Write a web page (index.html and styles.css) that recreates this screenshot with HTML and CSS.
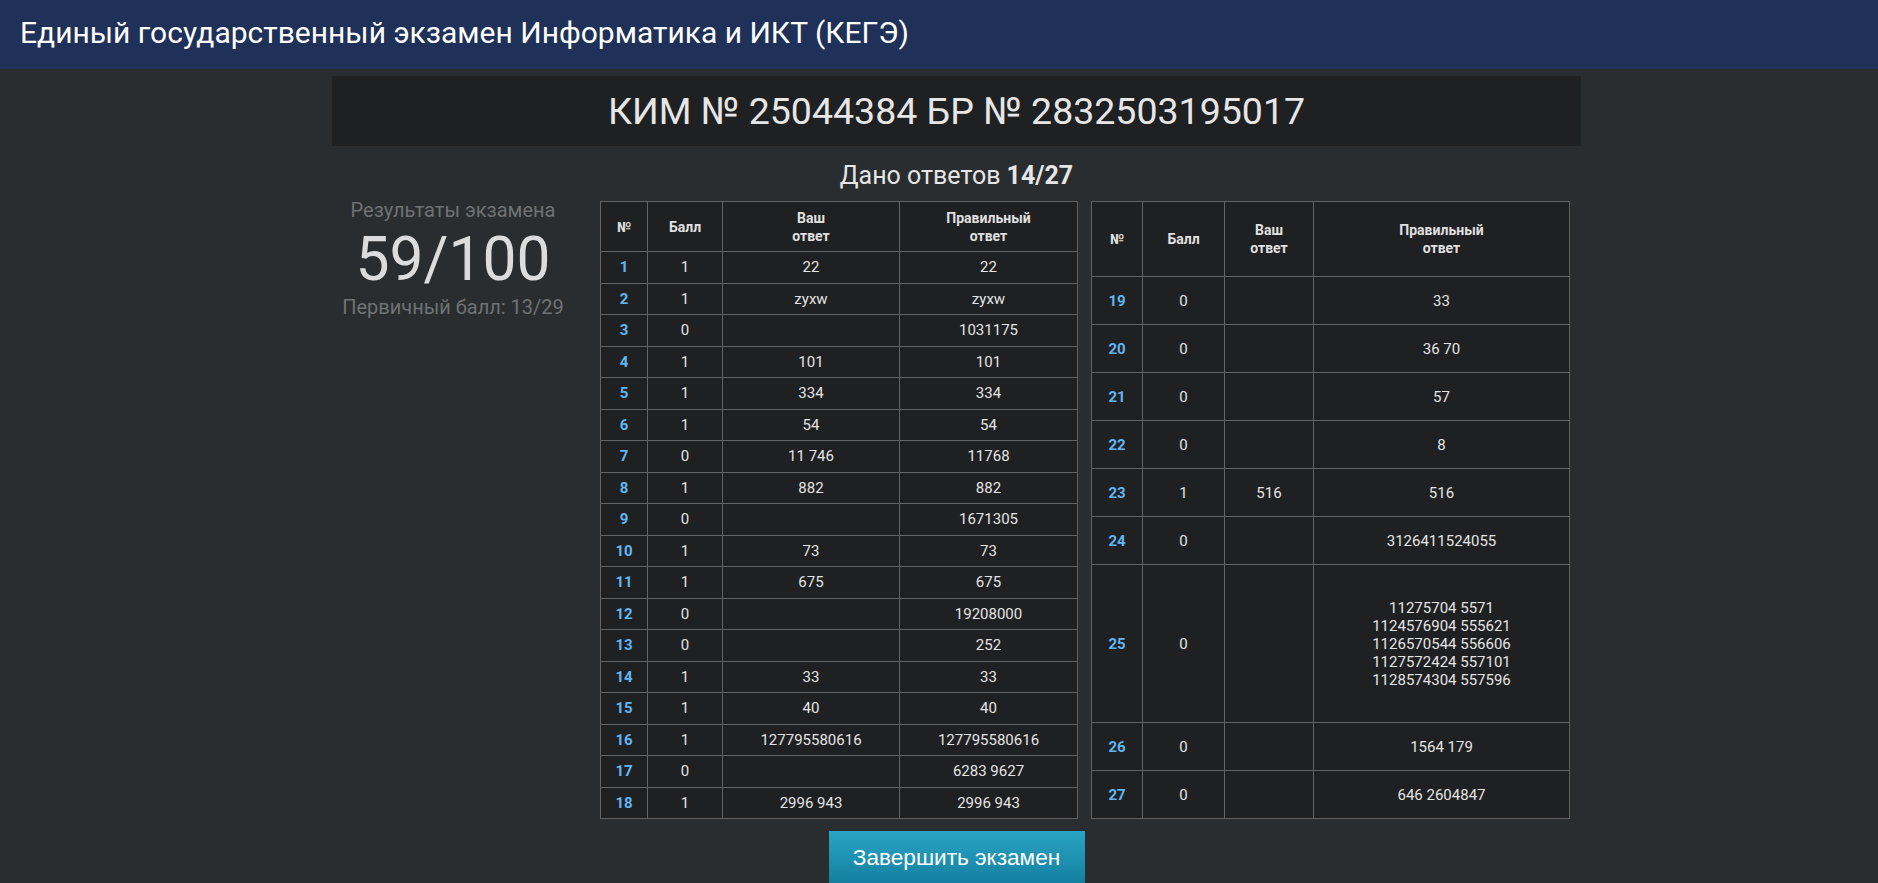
FILE: index.html
```html
<!DOCTYPE html>
<html lang="ru">
<head>
<meta charset="utf-8">
<title>КЕГЭ</title>
<link rel="stylesheet" href="styles.css">
</head>
<body>
<header class="topbar">Единый государственный экзамен Информатика и ИКТ (КЕГЭ)</header>
<main class="container">
  <div class="kim">КИМ № 25044384 БР № 2832503195017</div>
  <div class="given">Дано ответов <b>14/27</b></div>
  <div class="content">
    <aside class="summary">
      <div class="summary-label">Результаты экзамена</div>
      <div class="summary-score">59/100</div>
      <div class="summary-primary">Первичный балл: 13/29</div>
    </aside>
    <section class="tables">
      <table class="res res-left">
        <colgroup><col class="c1"><col class="c2"><col class="c3"><col class="c4"></colgroup>
        <thead><tr><th>№</th><th>Балл</th><th>Ваш<br>ответ</th><th>Правильный<br>ответ</th></tr></thead>
        <tbody>
          <tr><td class="n">1</td><td>1</td><td>22</td><td>22</td></tr>
          <tr><td class="n">2</td><td>1</td><td>zyxw</td><td>zyxw</td></tr>
          <tr><td class="n">3</td><td>0</td><td></td><td>1031175</td></tr>
          <tr><td class="n">4</td><td>1</td><td>101</td><td>101</td></tr>
          <tr><td class="n">5</td><td>1</td><td>334</td><td>334</td></tr>
          <tr><td class="n">6</td><td>1</td><td>54</td><td>54</td></tr>
          <tr><td class="n">7</td><td>0</td><td>11 746</td><td>11768</td></tr>
          <tr><td class="n">8</td><td>1</td><td>882</td><td>882</td></tr>
          <tr><td class="n">9</td><td>0</td><td></td><td>1671305</td></tr>
          <tr><td class="n">10</td><td>1</td><td>73</td><td>73</td></tr>
          <tr><td class="n">11</td><td>1</td><td>675</td><td>675</td></tr>
          <tr><td class="n">12</td><td>0</td><td></td><td>19208000</td></tr>
          <tr><td class="n">13</td><td>0</td><td></td><td>252</td></tr>
          <tr><td class="n">14</td><td>1</td><td>33</td><td>33</td></tr>
          <tr><td class="n">15</td><td>1</td><td>40</td><td>40</td></tr>
          <tr><td class="n">16</td><td>1</td><td>127795580616</td><td>127795580616</td></tr>
          <tr><td class="n">17</td><td>0</td><td></td><td>6283 9627</td></tr>
          <tr><td class="n">18</td><td>1</td><td>2996 943</td><td>2996 943</td></tr>
        </tbody>
      </table>
      <table class="res res-right">
        <colgroup><col class="d1"><col class="d2"><col class="d3"><col class="d4"></colgroup>
        <thead><tr><th>№</th><th>Балл</th><th>Ваш<br>ответ</th><th>Правильный<br>ответ</th></tr></thead>
        <tbody>
          <tr><td class="n">19</td><td>0</td><td></td><td>33</td></tr>
          <tr><td class="n">20</td><td>0</td><td></td><td>36 70</td></tr>
          <tr><td class="n">21</td><td>0</td><td></td><td>57</td></tr>
          <tr><td class="n">22</td><td>0</td><td></td><td>8</td></tr>
          <tr><td class="n">23</td><td>1</td><td>516</td><td>516</td></tr>
          <tr><td class="n">24</td><td>0</td><td></td><td>3126411524055</td></tr>
          <tr class="tall"><td class="n">25</td><td>0</td><td></td><td>11275704 5571<br>1124576904 555621<br>1126570544 556606<br>1127572424 557101<br>1128574304 557596</td></tr>
          <tr><td class="n">26</td><td>0</td><td></td><td>1564 179</td></tr>
          <tr><td class="n">27</td><td>0</td><td></td><td>646 2604847</td></tr>
        </tbody>
      </table>
    </section>
  </div>
  <div class="actions"><button class="finish" type="button">Завершить экзамен</button></div>
</main>
</body>
</html>
```
FILE: styles.css
```css
html, body {
  margin: 0;
  padding: 0;
}
body {
  background: #292d2f;
  font-family: Roboto, "Liberation Sans", sans-serif;
  color: #e2e2e2;
  overflow: hidden;
}
.topbar {
  height: 69px;
  background: #1f3059;
  color: #ffffff;
  font-size: 30px;
  display: flex;
  align-items: center;
  padding-left: 20px;
  padding-bottom: 4px;
  box-sizing: border-box;
}
.container {
  width: 1249px;
  margin: 7px 0 0 332px;
}
.kim {
  height: 70px;
  background: #1f2022;
  color: #e6e6e6;
  font-size: 37.5px;
  display: flex;
  align-items: center;
  justify-content: center;
}
.given {
  height: 55px;
  font-size: 25px;
  color: #e6e6e6;
  display: flex;
  align-items: center;
  justify-content: center;
  padding-top: 4px;
  box-sizing: border-box;
}
.given b {
  margin-left: 6px;
}
.content {
  display: flex;
  align-items: flex-start;
}
.summary {
  width: 242px;
  margin-right: 26px;
  margin-top: -2px;
  text-align: center;
}
.summary-label {
  font-size: 20px;
  line-height: 23px;
  color: #6f7274;
}
.summary-score {
  font-size: 60.5px;
  line-height: 71px;
  margin-top: 2px;
  color: #dcdcdc;
}
.summary-primary {
  font-size: 20px;
  line-height: 23px;
  margin-top: 1px;
  color: #6f7274;
}
.tables {
  display: flex;
  gap: 13px;
  align-items: flex-start;
}
.res {
  border-collapse: collapse;
  table-layout: fixed;
  background: #1f2022;
  font-size: 15px;
  color: #e4e4e4;
}
.res th, .res td {
  border: 1px solid #626262;
  text-align: center;
  vertical-align: middle;
  padding: 0 4px;
  line-height: 18px;
}
.res th {
  font-size: 14px;
  font-weight: 700;
  color: #e0e0e0;
}
.res td.n {
  font-weight: 700;
  color: #62b6f3;
}
.res-left { width: 478px; }
.res-left .c1 { width: 47px; }
.res-left .c2 { width: 75px; }
.res-left .c3 { width: 177px; }
.res-left .c4 { width: 178px; }
.res-left thead tr { height: 50px; }
.res-left tbody tr { height: 31.5px; }

.res-right { width: 479px; }
.res-right .d1 { width: 51px; }
.res-right .d2 { width: 82px; }
.res-right .d3 { width: 89px; }
.res-right .d4 { width: 256px; }
.res-right thead tr { height: 75px; }
.res-right tbody tr { height: 48px; }
.res-right tbody tr.tall { height: 158px; }

.actions {
  display: flex;
  justify-content: center;
  margin-top: 12px;
}
.finish {
  width: 256px;
  height: 54px;
  border: 0;
  border-radius: 0;
  background: linear-gradient(#2aa4c4, #137e9f);
  color: #ffffff;
  font-family: "Liberation Sans", Arial, sans-serif;
  font-size: 22.6px;
  padding: 0;
}
```
